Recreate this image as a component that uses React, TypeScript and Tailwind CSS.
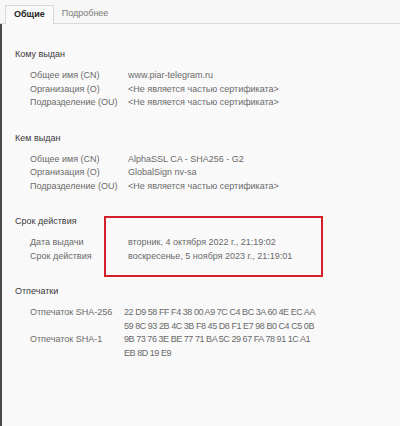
import React from 'react';

type Row = { label: string; value: string[] };

const issuedTo: Row[] = [
  { label: 'Общее имя (CN)', value: ['www.piar-telegram.ru'] },
  { label: 'Организация (O)', value: ['<Не является частью сертификата>'] },
  { label: 'Подразделение (OU)', value: ['<Не является частью сертификата>'] },
];

const issuedBy: Row[] = [
  { label: 'Общее имя (CN)', value: ['AlphaSSL CA - SHA256 - G2'] },
  { label: 'Организация (O)', value: ['GlobalSign nv-sa'] },
  { label: 'Подразделение (OU)', value: ['<Не является частью сертификата>'] },
];

const validity: Row[] = [
  { label: 'Дата выдачи', value: ['вторник, 4 октября 2022 г., 21:19:02'] },
  { label: 'Срок действия', value: ['воскресенье, 5 ноября 2023 г., 21:19:01'] },
];

const prints: Row[] = [
  {
    label: 'Отпечаток SHA-256',
    value: ['22 D9 58 FF F4 38 00 A9 7C C4 BC 3A 60 4E EC AA', '59 8C 93 2B 4C 3B F8 45 D8 F1 E7 98 B0 C4 C5 0B'],
  },
  { label: 'Отпечаток SHA-1', value: ['9B 73 76 3E BE 77 71 BA 5C 29 67 FA 78 91 1C A1', 'EB 8D 19 E9'] },
];

const Section = ({ title, rows, labelW, mono, highlight }: { title: string; rows: Row[]; labelW: string; mono?: boolean; highlight?: boolean }) => (
  <div className="relative">
    <div className="h-[22px] leading-[14px] text-[#3a3a3a]">{title}</div>
    <div className="pl-[15px]">
      {rows.map((r) => (
        <div key={r.label} className="flex">
          <div className={`${labelW} shrink-0 whitespace-nowrap text-[#6a6a6a]`}>{r.label}</div>
          <div className={`text-[#6a6a6a] ${mono ? 'tracking-[-0.45px]' : ''}`}>
            {r.value.map((v) => (
              <div key={v} className="h-[13.5px] leading-[13.5px] whitespace-nowrap">{v}</div>
            ))}
          </div>
        </div>
      ))}
    </div>
    {highlight && (
      <div className="absolute left-[89px] top-[2px] w-[219px] h-[61px] border-2 border-[#d3202b]" />
    )}
  </div>
);

export default function App() {
  return (
    <div
      className="w-[400px] h-[426px] bg-[#f9f9f9] text-[9px] leading-[13.5px] flex flex-col overflow-hidden"
      style={{ fontFamily: '"Liberation Sans", Arial, sans-serif' }}
    >
      <div className="h-[24px] flex items-end pl-[5px] border-b border-[#d9d9d9] bg-[#f7f7f7]">
        <div className="h-[19px] px-[8px] -mb-px bg-[#fafafa] border border-b-0 border-[#d9d9d9] flex items-center font-bold text-[#222]">
          Общие
        </div>
        <div className="h-[19px] px-[8px] flex items-center text-[#7a7a7a]">Подробнее</div>
      </div>
      <div className="flex-1 border-l-2 border-[#4a4a4a] pl-[13px] pt-[23px] flex flex-col gap-[21px]">
        <Section title="Кому выдан" rows={issuedTo} labelW="w-[98px]" />
        <Section title="Кем выдан" rows={issuedBy} labelW="w-[98px]" />
        <Section title="Срок действия" rows={validity} labelW="w-[98px]" highlight />
        <Section title="Отпечатки" rows={prints} labelW="w-[94px]" mono />
      </div>
    </div>
  );
}
